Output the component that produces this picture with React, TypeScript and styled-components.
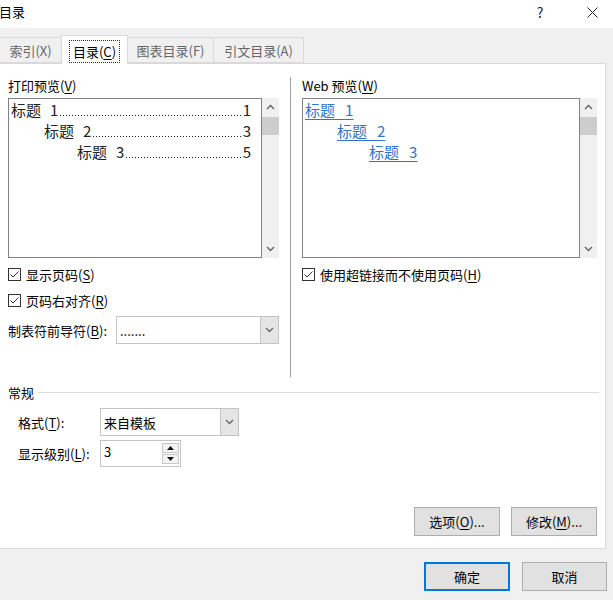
import { FC, ReactNode } from 'react'
import styled, { createGlobalStyle } from 'styled-components'

const GlobalStyle = createGlobalStyle`
  html, body {
    margin: 0;
    padding: 0;
    background: #f0f0f0;
  }
  body {
    font-family: "Noto Sans CJK SC", "Liberation Sans", sans-serif;
    font-size: 13px;
    color: #000;
  }
`

const Window = styled.div`
  width: 613px;
  height: 600px;
  display: flex;
  flex-direction: column;
  background: #f0f0f0;
  overflow: hidden;
`

const TitleBar = styled.div`
  height: 28px;
  flex-shrink: 0;
  background: #fff;
  display: flex;
  align-items: center;
`

const Title = styled.div`
  flex: 1;
  margin-left: -1px;
  font-size: 13px;
  line-height: 18px;
  padding-bottom: 4px;
`

const TitleButton = styled.div<{ $w: number; $mr: number }>`
  width: ${(p) => p.$w}px;
  margin-right: ${(p) => p.$mr}px;
  height: 28px;
  display: flex;
  align-items: center;
  justify-content: center;
  color: #222;
  font-size: 14px;
  padding-bottom: 4px;
  box-sizing: border-box;
`

const TabStrip = styled.div`
  height: 35px;
  flex-shrink: 0;
  display: flex;
  align-items: flex-end;
  position: relative;
  z-index: 1;
`

const Tab = styled.div<{ $w: number; $active?: boolean }>`
  box-sizing: border-box;
  width: ${(p) => p.$w}px;
  height: ${(p) => (p.$active ? 29 : 26)}px;
  margin-left: -1px;
  margin-bottom: ${(p) => (p.$active ? -1 : 0)}px;
  border: 1px solid #d9d9d9;
  border-bottom: ${(p) => (p.$active ? 'none' : '1px solid #d9d9d9')};
  background: ${(p) => (p.$active ? '#fff' : '#f0f0f0')};
  color: ${(p) => (p.$active ? '#000' : '#666')};
  display: flex;
  align-items: center;
  justify-content: center;
  font-size: 13px;
  line-height: 18px;
  padding-top: ${(p) => (p.$active ? 0 : 2)}px;
  &:first-child {
    margin-left: 0;
    border-left: none;
  }
`

const FocusRing = styled.span`
  border: 1px dotted #333;
  padding: 2px 3px 1px;
  margin-top: 2px;
`

const Panel = styled.div`
  box-sizing: border-box;
  width: 606px;
  height: 486px;
  flex-shrink: 0;
  background: #fff;
  border: 1px solid #d9d9d9;
  border-left: none;
  display: flex;
  flex-direction: column;
  padding: 12px 8px 0 8px;
`

const Columns = styled.div`
  display: flex;
  height: 301px;
`

const Column = styled.div<{ $w: number }>`
  width: ${(p) => p.$w}px;
  display: flex;
  flex-direction: column;
`

const Divider = styled.div`
  width: 1px;
  background: #a0a0a0;
  margin: 1px 11px 0;
`

const Label = styled.div`
  height: 20px;
  line-height: 20px;
  margin-bottom: 2px;
  white-space: nowrap;
`

const Key = styled.span`
  text-decoration: underline;
  text-underline-offset: 2px;
`

const Preview = styled.div`
  display: flex;
  height: 160px;
`

const PreviewBox = styled.div`
  flex: 1;
  min-width: 0;
  box-sizing: border-box;
  border: 1px solid #828282;
  padding-top: 1px;
`

const Scrollbar = styled.div`
  width: 17px;
  background: #f0f0f0;
  display: flex;
  flex-direction: column;
`

const ScrollArrow = styled.div<{ $grow?: boolean }>`
  height: 18px;
  display: flex;
  align-items: center;
  justify-content: center;
  margin-top: ${(p) => (p.$grow ? 'auto' : '0')};
`

const Thumb = styled.div`
  height: 18px;
  margin-top: 1px;
  background: #cdcdcd;
`

const TocLine = styled.div<{ $indent: number }>`
  display: flex;
  align-items: baseline;
  height: 21px;
  line-height: 20px;
  font-size: 15px;
  color: #222;
  padding-left: ${(p) => p.$indent}px;
  padding-right: 10px;
  white-space: nowrap;
`

const Num = styled.span`
  margin-left: 9px;
`

const Leader = styled.span`
  flex: 1;
  height: 1px;
  margin: 0 1px 0 2px;
  background-image: linear-gradient(to right, #222 1px, transparent 1px);
  background-size: 3px 1px;
  background-repeat: repeat-x;
`

const WebLine = styled.div<{ $indent: number }>`
  height: 21px;
  line-height: 20px;
  font-size: 15px;
  padding-left: ${(p) => p.$indent}px;
  white-space: nowrap;
`

const WebLink = styled.span`
  color: #2f74c8;
  text-decoration: underline;
  text-underline-offset: 3px;
`

const CheckRow = styled.label`
  display: flex;
  align-items: center;
  height: 20px;
  margin-top: 6px;
  gap: 5px;
  white-space: nowrap;
`

const Box = styled.span`
  box-sizing: border-box;
  width: 13px;
  height: 13px;
  border: 1px solid #333;
  background: #fff;
  display: flex;
  align-items: center;
  justify-content: center;
  flex-shrink: 0;
`

const FieldRow = styled.div<{ $label: number; $mt: number }>`
  display: flex;
  align-items: center;
  margin-top: ${(p) => p.$mt}px;
  & > span:first-child {
    width: ${(p) => p.$label}px;
    flex-shrink: 0;
    white-space: nowrap;
  }
`

const Select = styled.div<{ $w: number }>`
  box-sizing: border-box;
  width: ${(p) => p.$w}px;
  height: 28px;
  border: 1px solid #c4c4c4;
  display: flex;
  align-items: stretch;
  background: #fff;
`

const SelectValue = styled.div`
  flex: 1;
  display: flex;
  align-items: center;
  padding-left: 3px;
  font-size: 13px;
`

const SelectButton = styled.div`
  width: 17px;
  background: #e5e5e5;
  border-left: 1px solid #c4c4c4;
  display: flex;
  align-items: center;
  justify-content: center;
`

const Spinner = styled.div`
  box-sizing: border-box;
  width: 81px;
  height: 27px;
  border: 1px solid #c4c4c4;
  display: flex;
  background: #fff;
`

const SpinValue = styled.div`
  flex: 1;
  padding-left: 3px;
  line-height: 22px;
`

const SpinButtons = styled.div`
  width: 17px;
  display: flex;
  flex-direction: column;
  gap: 1px;
  padding: 2px 1px 2px 0;
`

const SpinButton = styled.div`
  flex: 1;
  border: 1px solid #c8c8c8;
  background: #f4f4f4;
  display: flex;
  align-items: center;
  justify-content: center;
`

const GroupHeader = styled.div`
  display: flex;
  align-items: center;
  height: 20px;
  margin-top: 5px;
  gap: 4px;
`

const GroupLine = styled.div`
  flex: 1;
  height: 1px;
  background: #dcdcdc;
  margin-right: -2px;
`

const GroupBody = styled.div`
  padding-left: 10px;
  display: flex;
  flex-direction: column;
`

const Actions = styled.div<{ $gap: number; $mt?: number }>`
  display: flex;
  justify-content: flex-end;
  gap: ${(p) => p.$gap}px;
  margin-top: ${(p) => p.$mt ?? 0}px;
`

const Button = styled.button<{ $w: number; $primary?: boolean }>`
  box-sizing: border-box;
  width: ${(p) => p.$w}px;
  height: 29px;
  font-family: inherit;
  font-size: 13px;
  color: #000;
  background: #e1e1e1;
  border: 1px solid ${(p) => (p.$primary ? '#0078d7' : '#adadad')};
  box-shadow: ${(p) => (p.$primary ? 'inset 0 0 0 1px #0078d7' : 'none')};
  padding: 0;
`

const Footer = styled.div`
  flex: 1;
  padding: 13px 6px 0 0;
`

const Chevron: FC<{ up?: boolean; color?: string }> = ({ up, color = '#606060' }) => (
  <svg width="9" height="6" viewBox="0 0 9 6">
    <path
      d={up ? 'M1 5 L4.5 1.5 L8 5' : 'M1 1 L4.5 4.5 L8 1'}
      fill="none"
      stroke={color}
      strokeWidth="1.3"
    />
  </svg>
)

const Triangle: FC<{ up?: boolean }> = ({ up }) => (
  <svg width="7" height="4" viewBox="0 0 7 4">
    <path d={up ? 'M0 4 L3.5 0 L7 4 Z' : 'M0 0 L3.5 4 L7 0 Z'} fill="#111" />
  </svg>
)

const Check: FC = () => (
  <Box>
    <svg width="11" height="11" viewBox="0 0 11 11">
      <path d="M1.5 5.5 L4 8 L9.5 2.5" fill="none" stroke="#333" strokeWidth="1" />
    </svg>
  </Box>
)

const ScrollTrack: FC = () => (
  <Scrollbar>
    <ScrollArrow>
      <Chevron up />
    </ScrollArrow>
    <Thumb />
    <ScrollArrow $grow>
      <Chevron />
    </ScrollArrow>
  </Scrollbar>
)

const Mnemonic: FC<{ text: string; k: string; tail?: string }> = ({ text, k, tail = '' }) => (
  <>
    {text}(<Key>{k}</Key>){tail}
  </>
)

const tocEntries = [
  { level: 1, page: '1' },
  { level: 2, page: '3' },
  { level: 3, page: '5' },
]

const SelectField: FC<{ w: number; children: ReactNode }> = ({ w, children }) => (
  <Select $w={w}>
    <SelectValue>{children}</SelectValue>
    <SelectButton>
      <Chevron color="#666" />
    </SelectButton>
  </Select>
)

export default function App() {
  return (
    <Window>
      <GlobalStyle />
      <TitleBar>
        <Title>目录</Title>
        <TitleButton $w={30} $mr={22}>?</TitleButton>
        <TitleButton $w={30} $mr={6}>
          <svg width="11" height="11" viewBox="0 0 11 11">
            <path d="M0.5 0.5 L10.5 10.5 M10.5 0.5 L0.5 10.5" stroke="#222" strokeWidth="1" />
          </svg>
        </TitleButton>
      </TitleBar>

      <TabStrip>
        <Tab $w={62}>索引(X)</Tab>
        <Tab $w={67} $active>
          <FocusRing>
            目录(<Key>C</Key>)
          </FocusRing>
        </Tab>
        <Tab $w={87}>图表目录(F)</Tab>
        <Tab $w={91}>引文目录(A)</Tab>
      </TabStrip>

      <Panel>
        <Columns>
          <Column $w={271}>
            <Label>
              <Mnemonic text="打印预览" k="V" />
            </Label>
            <Preview>
              <PreviewBox>
                {tocEntries.map((e) => (
                  <TocLine key={e.level} $indent={2 + (e.level - 1) * 33}>
                    <span>
                      标题<Num>{e.level}</Num>
                    </span>
                    <Leader />
                    <span>{e.page}</span>
                  </TocLine>
                ))}
              </PreviewBox>
              <ScrollTrack />
            </Preview>
            <CheckRow>
              <Check />
              <span>
                <Mnemonic text="显示页码" k="S" />
              </span>
            </CheckRow>
            <CheckRow>
              <Check />
              <span>
                <Mnemonic text="页码右对齐" k="R" />
              </span>
            </CheckRow>
            <FieldRow $label={108} $mt={6}>
              <span>
                <Mnemonic text="制表符前导符" k="B" tail=":" />
              </span>
              <SelectField w={163}>.......</SelectField>
            </FieldRow>
          </Column>

          <Divider />

          <Column $w={295}>
            <Label>
              Web 预览(<Key>W</Key>)
            </Label>
            <Preview>
              <PreviewBox>
                {tocEntries.map((e) => (
                  <WebLine key={e.level} $indent={2 + (e.level - 1) * 32}>
                    <WebLink>标题&nbsp;&nbsp;&nbsp;{e.level}</WebLink>
                  </WebLine>
                ))}
              </PreviewBox>
              <ScrollTrack />
            </Preview>
            <CheckRow>
              <Check />
              <span>
                <Mnemonic text="使用超链接而不使用页码" k="H" />
              </span>
            </CheckRow>
          </Column>
        </Columns>

        <GroupHeader>
          <span>常规</span>
          <GroupLine />
        </GroupHeader>
        <GroupBody>
          <FieldRow $label={82} $mt={6}>
            <span>
              <Mnemonic text="格式" k="T" tail=":" />
            </span>
            <SelectField w={139}>来自模板</SelectField>
          </FieldRow>
          <FieldRow $label={82} $mt={4}>
            <span>
              <Mnemonic text="显示级别" k="L" tail=":" />
            </span>
            <Spinner>
              <SpinValue>3</SpinValue>
              <SpinButtons>
                <SpinButton>
                  <Triangle up />
                </SpinButton>
                <SpinButton>
                  <Triangle />
                </SpinButton>
              </SpinButtons>
            </Spinner>
          </FieldRow>
        </GroupBody>

        <Actions $gap={11} $mt={40}>
          <Button $w={86}>
            <Mnemonic text="选项" k="O" tail="..." />
          </Button>
          <Button $w={86}>
            <Mnemonic text="修改" k="M" tail="..." />
          </Button>
        </Actions>
      </Panel>

      <Footer>
        <Actions $gap={12}>
          <Button $w={86} $primary>
            确定
          </Button>
          <Button $w={85}>取消</Button>
        </Actions>
      </Footer>
    </Window>
  )
}
